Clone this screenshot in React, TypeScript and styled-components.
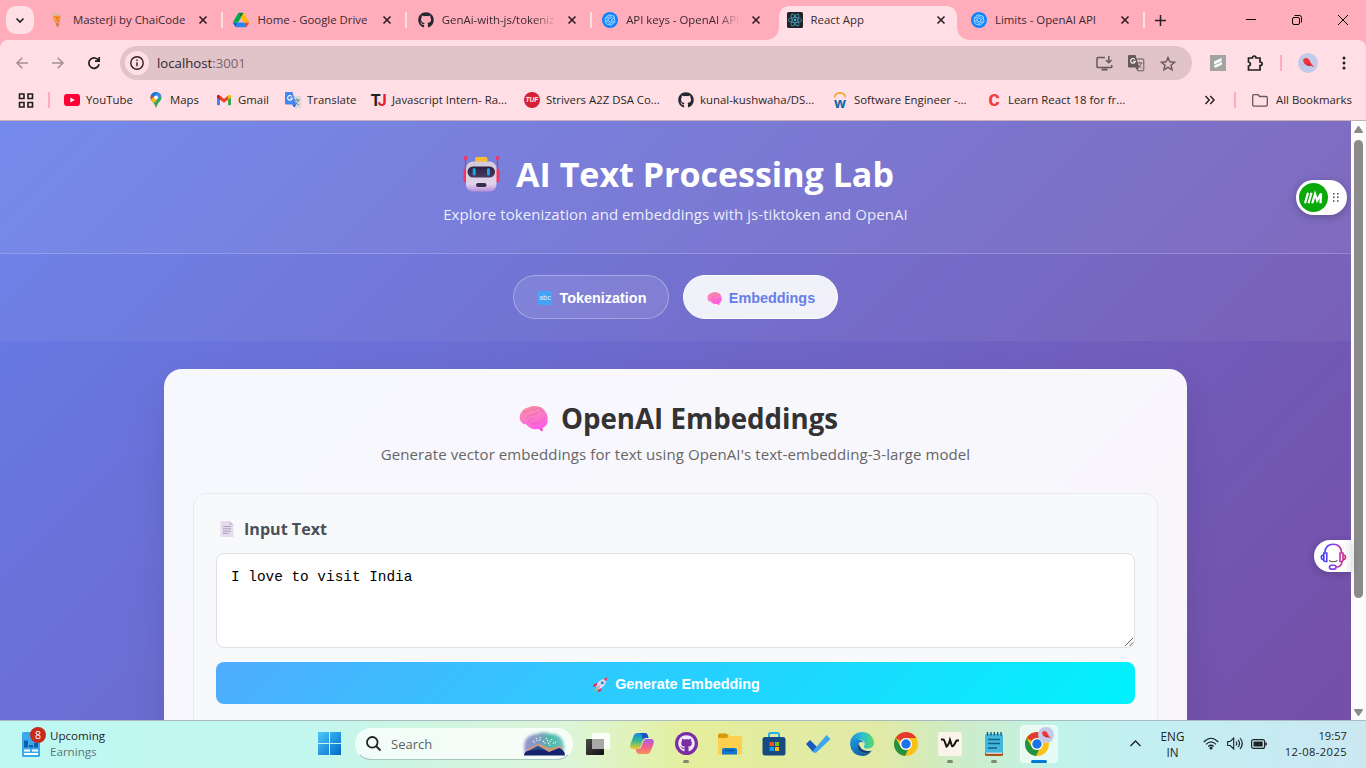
import React from "react";
import styled, { createGlobalStyle } from "styled-components";
import { FaGithub } from "react-icons/fa";
import { SiOpenai, SiReact } from "react-icons/si";

const ui = `"Open Sans", "Noto Sans", sans-serif`;
const arial = `"Liberation Sans", Arial, sans-serif`;

const Global = createGlobalStyle`
  *, *::before, *::after { box-sizing: border-box; }
  body { margin: 0; overflow: hidden; font-family: ${ui}; }
  svg { display: block; flex: none; overflow: visible; }
`;

const Screen = styled.div`
  width: 1366px;
  height: 768px;
  display: flex;
  flex-direction: column;
  overflow: hidden;
  background: #ffadbb;
`;

/* ---------- browser chrome ---------- */

const TabStrip = styled.div`
  height: 40px;
  flex: none;
  display: flex;
  align-items: center;
  padding-left: 6px;
  color: #3a2a30;
`;

const TabSearch = styled.div`
  width: 28px;
  height: 28px;
  border-radius: 10px;
  background: #ffdfe5;
  display: grid;
  place-items: center;
  margin-right: 7px;
`;

const Tab = styled.div<{ $sep?: boolean }>`
  position: relative;
  width: 178px;
  height: 40px;
  margin-right: 6.4px;
  flex: none;
  display: flex;
  align-items: center;
  padding: 0 8px;
  &::after {
    content: "";
    display: ${(p) => (p.$sep ? "block" : "none")};
    position: absolute;
    right: -4px;
    top: 12px;
    width: 2px;
    height: 16px;
    background: #ffdfe5;
  }
`;

const ActiveShape = styled.div`
  position: absolute;
  inset: 6px 0 0 0;
  background: #ffdfe5;
  border-radius: 10px 10px 0 0;
  &::before,
  &::after {
    content: "";
    position: absolute;
    bottom: 0;
    width: 12px;
    height: 12px;
  }
  &::before {
    left: -12px;
    background: radial-gradient(circle at 0 0, transparent 11.5px, #ffdfe5 12px);
  }
  &::after {
    right: -12px;
    background: radial-gradient(circle at 100% 0, transparent 11.5px, #ffdfe5 12px);
  }
`;

const TabIcon = styled.div`
  position: relative;
  width: 16px;
  height: 16px;
  display: grid;
  place-items: center;
`;

const TabTitle = styled.div<{ $fade?: boolean }>`
  position: relative;
  flex: 1;
  margin-left: 8px;
  margin-right: 8px;
  font-size: 11.4px;
  line-height: 16px;
  white-space: nowrap;
  overflow: hidden;
  mask-image: ${(p) => (p.$fade ? "linear-gradient(90deg,#000 80%,transparent)" : "none")};
`;

const CloseBox = styled.div`
  position: relative;
  width: 16px;
  height: 16px;
  display: grid;
  place-items: center;
`;

const NewTab = styled.div`
  width: 11px;
  margin-left: 8px;
`;

const WindowButtons = styled.div`
  margin-left: auto;
  display: flex;
`;

const WindowButton = styled.div`
  width: 46px;
  height: 40px;
  display: grid;
  place-items: center;
`;

const Toolbar = styled.div`
  height: 40px;
  flex: none;
  background: #ffdfe5;
  border-radius: 8px 8px 0 0;
  display: flex;
  align-items: center;
  padding: 6px 0 0 4px;
`;

const ToolButton = styled.div<{ $w?: number }>`
  width: ${(p) => p.$w ?? 36}px;
  height: 34px;
  flex: none;
  display: grid;
  place-items: center;
`;

const AddressBar = styled.div`
  width: 1072px;
  flex: none;
  height: 34px;
  margin-left: 8px;
  border-radius: 17px;
  background: #e1c4ca;
  display: flex;
  align-items: center;
  padding: 0 8px 0 5px;
`;

const SiteInfo = styled.div`
  width: 24px;
  height: 24px;
  border-radius: 50%;
  background: #ffdfe5;
  display: grid;
  place-items: center;
`;

const Url = styled.div`
  margin-left: 8px;
  flex: 1;
  font-size: 13.2px;
  line-height: 20px;
  color: #33262b;
  span {
    color: #7a6469;
  }
`;

const ShortRule = styled.div`
  width: 2px;
  height: 16px;
  background: #ffadbb;
  flex: none;
`;

const Bookmarks = styled.div`
  height: 41px;
  flex: none;
  background: #ffdfe5;
  border-bottom: 1px solid #c9adb9;
  display: flex;
  align-items: center;
  font-size: 11.4px;
  color: #2b1f24;
  padding-left: 18px;
`;

const Bookmark = styled.div<{ $w: number; $gap?: number }>`
  width: ${(p) => p.$w}px;
  flex: none;
  display: flex;
  align-items: center;
  gap: ${(p) => p.$gap ?? 6}px;
  white-space: nowrap;
  span {
    padding-bottom: 2px;
  }
`;

/* ---------- page ---------- */

const Viewport = styled.div`
  position: relative;
  height: 599px;
  flex: none;
  display: flex;
  overflow: hidden;
`;

const Page = styled.div`
  width: 1351px;
  height: 757px;
  background: linear-gradient(135deg, #667eea 0%, #764ba2 100%);
`;

const Header = styled.header`
  height: 133px;
  padding-top: 28px;
  background: rgba(255, 255, 255, 0.1);
  border-bottom: 1px solid rgba(255, 255, 255, 0.2);
  text-align: center;
  color: #fff;
`;

const Heading = styled.div<{ $size: number; $gap: number; $lh: number }>`
  display: flex;
  justify-content: center;
  align-items: center;
  gap: ${(p) => p.$gap}px;
  padding-left: 6px;
  font-size: ${(p) => p.$size}px;
  line-height: ${(p) => p.$lh}px;
  font-weight: 700;
`;

const Lead = styled.p<{ $color: string; $track: number }>`
  margin: 3px 0 0;
  text-align: center;
  font-size: 15px;
  line-height: 24px;
  letter-spacing: ${(p) => p.$track}px;
  color: ${(p) => p.$color};
`;

const Nav = styled.nav`
  height: 87px;
  background: rgba(255, 255, 255, 0.05);
  display: flex;
  justify-content: center;
  align-items: flex-start;
  padding-top: 21px;
  gap: 14px;
`;

const NavButton = styled.div<{ $active?: boolean; $w: number }>`
  width: ${(p) => p.$w}px;
  height: 44px;
  border-radius: 22px;
  border: 1px solid ${(p) => (p.$active ? "#fff" : "rgba(255,255,255,0.3)")};
  background: ${(p) => (p.$active ? "rgba(255,255,255,0.9)" : "rgba(255,255,255,0.1)")};
  color: ${(p) => (p.$active ? "#667eea" : "#fff")};
  display: flex;
  justify-content: center;
  align-items: center;
  gap: 7px;
  padding: 2px 0 0 1px;
  font: 700 14.4px/20px ${arial};
`;

const Card = styled.main`
  width: 1023px;
  height: 420px;
  margin: 28px auto 0;
  padding: 28px 29px 0;
  border-radius: 18px;
  background: rgba(255, 255, 255, 0.95);
  box-shadow: 0 18px 36px rgba(0, 0, 0, 0.1);
  color: #333;
`;

const Section = styled.section`
  height: 300px;
  margin-top: 27px;
  padding: 21px 22px 0;
  border: 1px solid #e9ecef;
  border-radius: 13px;
  background: #f8f9fa;
`;

const FieldLabel = styled.div`
  display: flex;
  align-items: center;
  gap: 8px;
  padding-left: 2px;
  height: 28px;
  font-size: 16.1px;
  line-height: 28px;
  font-weight: 700;
  color: #495057;
`;

const TextBox = styled.div`
  position: relative;
  width: 919px;
  height: 95px;
  margin-top: 10px;
  padding: 13px 14px;
  border: 1px solid #dee2e6;
  border-radius: 8px;
  background: #fff;
  color: #000;
  font: 14.4px/20px "Liberation Mono", "Courier New", monospace;
`;

const Grip = styled.div`
  position: absolute;
  right: 1px;
  bottom: 1px;
`;

const Generate = styled.div`
  width: 919px;
  height: 42px;
  margin-top: 14px;
  border-radius: 8px;
  background: linear-gradient(135deg, #4facfe 0%, #00f2fe 100%);
  display: flex;
  justify-content: center;
  align-items: center;
  gap: 6px;
  padding: 2px 0 0 1px;
  color: #fff;
  font: 700 14.4px/20px ${arial};
`;

const ScrollTrack = styled.div`
  width: 15px;
  height: 599px;
  background: #fcfcfc;
  display: flex;
  flex-direction: column;
  align-items: center;
  padding: 5px 0 4px;
`;

const ScrollThumb = styled.div`
  width: 9px;
  height: 458px;
  margin: 7px 0 auto;
  border-radius: 5px;
  background: #8b8b8b;
`;

const MaskWidget = styled.div`
  position: absolute;
  left: 1296px;
  top: 59px;
  width: 51px;
  height: 35px;
  border-radius: 18px;
  background: #fff;
  box-shadow: 0 2px 8px rgba(0, 0, 0, 0.25);
  display: flex;
  align-items: center;
  gap: 5px;
  padding-left: 3px;
`;

const SupportWidget = styled.div`
  position: absolute;
  left: 1314px;
  top: 419px;
  width: 37px;
  height: 32px;
  border-radius: 16px 0 0 16px;
  background: linear-gradient(90deg, #fff 78%, #eee);
  box-shadow: 0 2px 8px rgba(0, 0, 0, 0.2);
  padding: 3px 0 0 6px;
`;

/* ---------- taskbar ---------- */

const Taskbar = styled.footer`
  height: 48px;
  flex: none;
  border-top: 1px solid #a9bcbf;
  background: linear-gradient(90deg, #bff7f2 0, #c1f7f0 300px, #ccf5e4 400px, #ddf5d8 570px,
    #e0f2b5 640px, #e4ee9c 690px, #e0eaa6 880px, #cdecc8 960px, #c0f3ea 1060px, #c2eff2 1130px, #cbe8f2 1366px);
  display: flex;
  align-items: center;
  padding-bottom: 2px;
  color: #1c2426;
`;

const Widgets = styled.div`
  width: 285px;
  margin-left: 22px;
  display: flex;
  align-items: center;
  gap: 9px;
  font-size: 11.6px;
  line-height: 16px;
  span {
    color: #5c7474;
  }
`;

const WidgetIcon = styled.div`
  position: relative;
  width: 19px;
  height: 24px;
`;

const Badge = styled.div`
  position: absolute;
  left: 8px;
  top: -5px;
  width: 16px;
  height: 16px;
  border-radius: 50%;
  background: #c42b1c;
  color: #fff;
  font-size: 10.5px;
  line-height: 16px;
  text-align: center;
`;

const Cell = styled.div<{ $w?: number }>`
  position: relative;
  width: ${(p) => p.$w ?? 44}px;
  height: 47px;
  flex: none;
  display: grid;
  place-items: center;
`;

const RunDot = styled.div<{ $active?: boolean }>`
  position: absolute;
  left: 50%;
  top: 40px;
  width: ${(p) => (p.$active ? 16 : 6)}px;
  height: 3px;
  border-radius: 2px;
  transform: translateX(-50%);
  background: ${(p) => (p.$active ? "#0078d4" : "#7d8a70")};
`;

const ActiveTile = styled.div`
  width: 38px;
  height: 38px;
  border-radius: 4px;
  background: rgba(255, 255, 255, 0.6);
  border: 1px solid rgba(255, 255, 255, 0.35);
  display: grid;
  place-items: center;
`;

const SearchPill = styled.div`
  width: 218px;
  height: 32px;
  margin-left: 4px;
  margin-right: 3px;
  border-radius: 16px;
  background: rgba(255, 255, 255, 0.75);
  border: 1px solid rgba(255, 255, 255, 0.5);
  border-bottom-color: #a9c5bf;
  display: flex;
  align-items: center;
  padding: 0 5px 0 10px;
  font-size: 13px;
  color: #5a5f61;
  span {
    margin-left: 10px;
    flex: 1;
  }
`;

const Tray = styled.div`
  display: flex;
  align-items: center;
  margin-left: 62px;
`;

const Language = styled.div`
  width: 53px;
  text-align: center;
  font-size: 11.7px;
  line-height: 16px;
`;

const Clock = styled.div`
  margin-left: auto;
  margin-right: 19px;
  text-align: right;
  font-size: 11.2px;
  line-height: 16px;
  white-space: nowrap;
  span {
    letter-spacing: 0.4px;
  }
`;

/* ---------- drawings ---------- */

const Close = () => (
  <svg width="8" height="8" viewBox="0 0 8 8" stroke="#2b1f24" strokeWidth="1.6">
    <path d="M.5.5l7 7M7.5.5l-7 7" />
  </svg>
);

const OpenAiBadge = () => (
  <svg width="16" height="16" viewBox="0 0 16 16">
    <circle cx="8" cy="8" r="8" fill="#0a84ff" />
    <SiOpenai x="2.5" y="2.5" size={11} color="#d7ecff" />
  </svg>
);

const ReactBadge = () => (
  <svg width="16" height="16" viewBox="0 0 16 16">
    <rect width="16" height="16" rx="1.5" fill="#20232a" />
    <SiReact x="1" y="1" size={14} color="#4fb5cc" />
  </svg>
);

const Cup = () => (
  <svg width="16" height="16" viewBox="0 0 16 16">
    <path d="M1.5 1.8l8.500-1 .8 2.800-8 .8z" fill="#dfb7a2" />
    <path d="M4 4.200l7.500-.6-.8 6.400-4.700.5z" fill="#f58a1f" />
    <path d="M5 5.500l5.500 1-.5 2.500-4-1z" fill="#ffb04c" />
    <path d="M7 5.500l2.500 3" stroke="#a8481a" strokeWidth="1" />
    <path d="M6.500 11l4-.5-.4 3.800-2.600.5z" fill="#d08458" />
  </svg>
);

const Drive = () => (
  <svg width="16" height="16" viewBox="0 0 87.300 78">
    <path d="m6.600 66.850 3.850 6.650c.8 1.400 1.950 2.500 3.300 3.300l13.750-23.800h-27.500c0 1.550.4 3.100 1.200 4.500z" fill="#0066da" />
    <path d="m43.650 25-13.750-23.800c-1.350.8-2.500 1.900-3.300 3.300l-25.400 44a9.060 9.060 0 0 0-1.200 4.500h27.500z" fill="#00ac47" />
    <path d="m73.550 76.800c1.350-.8 2.500-1.900 3.300-3.300l1.600-2.750 7.650-13.250c.8-1.400 1.200-2.950 1.200-4.500h-27.502l5.852 11.500z" fill="#ea4335" />
    <path d="m43.650 25 13.750-23.800c-1.350-.8-2.900-1.200-4.500-1.200h-18.500c-1.600 0-3.150.45-4.500 1.200z" fill="#00832d" />
    <path d="m59.800 53h-32.300l-13.750 23.800c1.350.8 2.900 1.200 4.500 1.200h50.800c1.600 0 3.150-.45 4.500-1.200z" fill="#2684fc" />
    <path d="m73.400 26.500-12.700-22c-.8-1.400-1.950-2.500-3.300-3.300l-13.750 23.800 16.150 28h27.450c0-1.550-.4-3.100-1.200-4.500z" fill="#ffba00" />
  </svg>
);

const Translate = ({ gray }: { gray?: boolean }) => (
  <svg width="16" height="16" viewBox="0 0 16 16">
    <path d="M6.500 4H15q.8 0 .8.8V15q0 .8-.8.8H9.800z" fill={gray ? "#e1c4ca" : "#d5d8dc"} stroke={gray ? "#66575b" : "none"} />
    <path d="M8.500 8h6M11.500 6.800V8M13.500 8q-.8 3-4 5M10 9.500q1 2.500 3.800 3.500" stroke={gray ? "#66575b" : "#687a85"} fill="none" strokeWidth=".9" />
    <path d="M1 0h6.500l3.500 12.500H1q-1 0-1-1V1q0-1 1-1z" fill={gray ? "#66575b" : "#4285f4"} />
    <path d="M7 12.500h4L9.500 15.500z" fill={gray ? "#66575b" : "#1a56c4"} />
    <path d="M6.800 4.500A2.300 2.300 0 1 0 7.200 6.300H5.200" stroke="#fff" fill="none" strokeWidth="1.100" />
  </svg>
);

const YouTube = () => (
  <svg width="16" height="16" viewBox="0 0 16 16">
    <rect y="2" width="16" height="12" rx="3" fill="#f03" />
    <path d="M6.400 5.400v5.200L10.800 8z" fill="#fff" />
  </svg>
);

const Maps = () => (
  <svg width="16" height="16" viewBox="0 0 16 16">
    <clipPath id="pin">
      <path d="M8 0a5.500 5.500 0 0 1 5.500 5.500C13.500 9.500 9.300 10.500 8.600 15q-.6 1.600-1.200 0C6.700 10.500 2.500 9.500 2.500 5.500A5.500 5.500 0 0 1 8 0z" />
    </clipPath>
    <g clipPath="url(#pin)">
      <rect width="16" height="16" fill="#34a853" />
      <path d="M0 0h10L4 7 0 4z" fill="#1a73e8" />
      <path d="M0 2l6 3-4 6-2-2z" fill="#ea4335" />
      <path d="M2 9l9-9 4 2L4 13z" fill="#4285f4" />
      <path d="M1 9l5-4 3 3-6 6z" fill="#fbbc04" />
    </g>
    <circle cx="8" cy="5.500" r="1.900" fill="#fff" />
  </svg>
);

const Gmail = () => (
  <svg width="16" height="16" viewBox="0 0 16 16">
    <path d="M1 4v8.500q0 .8.800.8H4V6.800z" fill="#4285f4" />
    <path d="M15 4v8.500q0 .8-.8.8H12V6.800z" fill="#34a853" />
    <path d="M12 3.800v4L15 5.600V4q-.4-2-2.100-1z" fill="#fbbc04" />
    <path d="M4 3.800v4L1 5.600V4q.4-2 2.100-1z" fill="#c5221f" />
    <path d="M4 3.700l4 3 4-3v4l-4 3-4-3z" fill="#ea4335" />
  </svg>
);

const LetterMark = ({ kind }: { kind: "TJ" | "TUF" | "W" | "C" }) => (
  <svg width="16" height="16" viewBox="0 0 16 16" fontWeight="700" textAnchor="middle">
    {kind === "TJ" && (
      <text x="8.200" y="14" fontFamily="Roboto" fontSize="16" letterSpacing="-1" fill="#222">
        T<tspan fill="#e0202c">J</tspan>
      </text>
    )}
    {kind === "TUF" && (
      <>
        <circle cx="8" cy="8" r="8" fill="#d71f35" />
        <text x="8" y="10.400" fontFamily="Liberation Sans" fontSize="6.600" fontStyle="italic" fill="#fff">TUF</text>
      </>
    )}
    {kind === "W" && (
      <>
        <path d="M2.500 5.500Q3 1 8 1t5.500 4.500" fill="none" stroke="#f6a11f" strokeWidth="1.300" />
        <text x="8" y="15.500" fontFamily="Open Sans" fontSize="14" fill="#0b68ad">w</text>
      </>
    )}
    {kind === "C" && (
      <text x="8" y="14" fontFamily="Roboto" fontSize="17" fontWeight="900" fill="#ef4140">C</text>
    )}
  </svg>
);

const Bird = ({ size }: { size: number }) => (
  <svg width={size} height={size} viewBox="0 0 20 20">
    <circle cx="10" cy="10" r="10" fill="#c3c9e8" />
    <path d="M5 7q.5-2 3.500-2 3 .5 4 4.500l3.500 4.500-4-1.500q-6 1-7-5.500z" fill="#f0343c" />
    <path d="M8.500 10l5 3-3.500-.3z" fill="#a3243d" />
  </svg>
);

const Brain = ({ size }: { size: number }) => (
  <svg width={size} height={size} viewBox="0 0 32 32">
    <defs>
      <linearGradient id="brain" x1="0" y1="0" x2=".4" y2="1">
        <stop offset="0" stopColor="#e8809a" />
        <stop offset=".25" stopColor="#f98cab" />
        <stop offset=".55" stopColor="#fb7cc8" />
        <stop offset="1" stopColor="#ff5fe0" />
      </linearGradient>
    </defs>
    <path d="M21 25l5 0 0 5.500q-3-1-5-4.500z" fill="#f43fc0" />
    <path d="M11 3.500q4-2 9-1 5 .5 8 4.500 4 4 3.500 10Q32 23 28 25q-3 3-8 2.500-6 1-9-2-2-1-2.500-3-5 0-7-4Q-.5 13 2.500 9 5 4.500 11 3.500z" fill="url(#brain)" />
    <path d="M5 9q4 1.500 6-2M13 6q4 2 7-1M23 4q-1 4 4 5M8 16q4-5 7-4 4 0 6-3M11 19q0-3 4-3M14 21q6 1.500 9-1 4-1 6-5" fill="none" stroke="#d9569c" strokeWidth="1" strokeLinecap="round" opacity=".65" />
  </svg>
);

const Robot = () => (
  <svg width="37" height="38" viewBox="0 0 37 38">
    <defs>
      <linearGradient id="bot" x1="0" y1="0" x2="0" y2="1">
        <stop offset="0" stopColor="#d2cbd8" />
        <stop offset=".75" stopColor="#e0d2ea" />
        <stop offset="1" stopColor="#b78fd8" />
      </linearGradient>
      <linearGradient id="visor" x1="0" y1="0" x2="0" y2="1">
        <stop offset="0" stopColor="#2b1f3d" />
        <stop offset="1" stopColor="#4a3b63" />
      </linearGradient>
    </defs>
    <path d="M2.500 3v14M34.500 3v14" stroke="#d8355f" strokeWidth="1.200" />
    <circle cx="2.500" cy="3" r="2" fill="#f8335e" />
    <circle cx="34.500" cy="3" r="2" fill="#f8335e" />
    <rect x=".5" y="14" width="4" height="13.500" rx="2" fill="#f0365f" />
    <rect x="32.500" y="14" width="4" height="13.500" rx="2" fill="#f0365f" />
    <rect x="12" y="2" width="12.500" height="5.500" rx="2" fill="#f9bd2e" />
    <rect x="3" y="6.500" width="30.500" height="30" rx="7" fill="url(#bot)" />
    <rect x="4.500" y="11.500" width="27.500" height="11" rx="5.500" fill="url(#visor)" />
    <rect x="9.700" y="13" width="3" height="7.500" rx="1.500" fill="#19a5e8" />
    <rect x="24" y="13" width="3" height="7.500" rx="1.500" fill="#19a5e8" />
    <rect x="13" y="28" width="10.500" height="4" rx="2" fill="#382c4c" />
  </svg>
);

const AbcIcon = () => (
  <svg width="16" height="16" viewBox="0 0 16 16">
    <rect x="1" y="1" width="14" height="14" rx="1" fill="#45a3f7" />
    <text x="8" y="10" textAnchor="middle" fontFamily="Open Sans" fontWeight="400" fontSize="7" fill="#e7f4ff">abc</text>
  </svg>
);

const PageIcon = () => (
  <svg width="18" height="18" viewBox="0 0 18 18">
    <path d="M2.500 1h9l4 4v12h-13z" fill="#e5dcf0" />
    <path d="M11.500 1v4h4z" fill="#c8bdd3" />
    <path d="M5 6.500h8M5 8.800h8M5 11.100h8M5 13.300h5.500" stroke="#a99db5" strokeWidth="1" />
  </svg>
);

const Rocket = () => (
  <svg width="17" height="17" viewBox="0 0 17 17">
    <path d="M5 7L1.500 8.500 1 11l4-1zM10 12l-1.500 3.500-2.500.5 1-4z" fill="#e1304f" />
    <path d="M4 12l-2.500 3.500L5.500 13z" fill="#ffb02e" />
    <path d="M4 11Q6 3 14.500 2.500 14.500 10 6.500 13.500z" fill="#e8dff0" />
    <path d="M11.500 2.900q1.500-.5 4-1.700-.7 2.500-1.500 4.300z" fill="#f23b5d" />
    <circle cx="10.300" cy="6.800" r="1.600" fill="#3c8ae8" />
    <path d="M4 11l2.500 2.500L9 8.500z" fill="#b8a7c9" />
  </svg>
);

const Headset = () => (
  <svg width="27" height="27" viewBox="0 0 27 27" fill="none">
    <defs>
      <linearGradient id="hs" gradientUnits="userSpaceOnUse" x1="1" x2="26" y1="0" y2="0">
        <stop offset="0" stopColor="#3340ff" />
        <stop offset=".5" stopColor="#8a3df0" />
        <stop offset="1" stopColor="#e0266f" />
      </linearGradient>
    </defs>
    <g stroke="url(#hs)" strokeWidth="1.600">
      <path d="M4.800 9.500Q5.500 1.200 13.200 1.200t8.400 8.300" />
      <path d="M3.800 10h3v8.500H5.300Q3.800 18.500 3.800 17z" />
      <path d="M20 10h3v7q0 1.500-1.500 1.500H20z" />
      <path d="M3.800 12q-2.500 0-2.500 2.300t2.500 2.300M23 12q2.500 0 2.500 2.300T23 16.600M22 18.500q0 5-6 5.800" />
      <rect x="9.500" y="22.300" width="6.500" height="3.800" rx="1.900" />
    </g>
    <path d="M9 17.500q4.300 2.500 8.600 0" stroke="#555" strokeWidth="1.100" />
  </svg>
);

const MaskLogo = () => (
  <svg width="29" height="29" viewBox="0 0 29 29">
    <circle cx="14.500" cy="14.500" r="14.500" fill="#0aa80a" />
    <path d="M6 20.300l3-10.500M9.500 20.300l3-10.500" stroke="#fff" strokeWidth="2.200" />
    <path d="M13.300 20.300l2.700-9.300 2.200 6.500 3.800-7-.5 9.800" stroke="#fff" strokeWidth="2.300" fill="none" />
  </svg>
);

const StartLogo = () => (
  <svg width="23" height="23" viewBox="0 0 23 23">
    <defs>
      <linearGradient id="win" gradientUnits="userSpaceOnUse" x1="0" y1="0" x2="23" y2="23">
        <stop offset="0" stopColor="#4cc9fa" />
        <stop offset="1" stopColor="#0068c9" />
      </linearGradient>
    </defs>
    <path d="M0 0h11v11H0zM12 0h11v11H12zM0 12h11v11H0zM12 12h11v11H12z" fill="url(#win)" />
  </svg>
);

const SearchScene = () => (
  <svg width="46" height="26" viewBox="0 0 46 26">
    <defs>
      <linearGradient id="sky" x1="0" x2="1" y1="0" y2="0">
        <stop offset="0" stopColor="#8a86cf" />
        <stop offset=".4" stopColor="#7295b8" />
        <stop offset=".65" stopColor="#36b19c" />
        <stop offset="1" stopColor="#62bfc3" />
      </linearGradient>
      <filter id="soft"><feGaussianBlur stdDeviation="1.500" /></filter>
    </defs>
    <path d="M4 23Q0 4 16 3q6-3 14 0 14 0 13 17z" fill="url(#sky)" filter="url(#soft)" opacity=".9" />
    <path d="M6 18l12-5 10 4 12-2v7H6z" fill="#e8956d" opacity=".8" />
    <path d="M3 24.500q0-4 5-5l9-4.500 11 6 10-4q6 2 6 7.500z" fill="#17226e" />
    <path d="M8 20l9-5 8 4.500-8-1z" fill="#254f8f" />
    <path d="M12 10l2 2M19 6v4M25 7l2 3M31 8l-3 4M35 11l-4 2M15 7l2 4M22 10l3 3M27 12l3 3" stroke="#fff" strokeWidth="1.100" strokeDasharray="1.200 1" />
  </svg>
);

const TaskView = () => (
  <svg width="24" height="24" viewBox="0 0 24 24">
    <defs>
      <linearGradient id="tv" x1="0" x2="1" y1="0" y2="1">
        <stop offset="0" stopColor="#4a4a4a" /><stop offset="1" stopColor="#111" />
      </linearGradient>
    </defs>
    <rect x="0" y="7" width="18" height="16" rx="1" fill="url(#tv)" />
    <rect x="6" y="1" width="18" height="16" rx="1" fill="#fff" opacity=".85" />
    <rect x="6" y="7" width="12" height="10" fill="#a8a8a8" />
  </svg>
);

const Copilot = () => (
  <svg width="24" height="24" viewBox="0 0 24 24">
    <defs>
      <linearGradient id="cpa" x1="0" x2="0" y1="0" y2="1">
        <stop offset="0" stopColor="#1784e8" /><stop offset=".5" stopColor="#38b88c" /><stop offset="1" stopColor="#f2cc2f" />
      </linearGradient>
      <linearGradient id="cpb" x1="0" x2="0" y1="0" y2="1">
        <stop offset="0" stopColor="#a95cf0" /><stop offset=".5" stopColor="#f0608f" /><stop offset="1" stopColor="#fb9053" />
      </linearGradient>
    </defs>
    <path d="M8 1h7q2 0 2.700 2.200L18.500 6h-3q-2 0-2.700 2L10.500 15Q9.700 17 7.500 17H3.500Q-1 17 .5 12L3.500 4Q4.500 1 8 1z" fill="url(#cpa)" />
    <path d="M10 1h5q2 0 2.700 2.200L18.500 6h-3q-2 0-2.700 2L12 3z" fill="#1651c9" />
    <path d="M16 22H9q-2 0-2.500-2L5.700 17H8.500q2 0 2.700-2L13.500 9Q14.200 7 16.500 7h4Q25 7 23.500 12l-3 7.500Q19.500 22 16 22z" fill="url(#cpb)" />
  </svg>
);

const GithubDesktop = () => (
  <svg width="23" height="23" viewBox="0 0 23 23">
    <circle cx="11.500" cy="11.500" r="11.500" fill="#7b2da3" />
    <FaGithub x="3" y="3" size={17} color="#f2e8f7" />
  </svg>
);

const Folder = () => (
  <svg width="24" height="24" viewBox="0 0 24 24">
    <path d="M0 3q0-1.500 1.500-1.500h7L11 4h11.500Q24 4 24 5.500V10H0z" fill="#d89a0a" />
    <path d="M0 6h8.500L11 4h11.500Q24 4 24 5.500V21q0 1.500-1.500 1.500h-21Q0 22.500 0 21z" fill="#ffd04f" />
    <path d="M4 22.500V18q0-2 2-2h11q2 0 2 2v4.500z" fill="#0f78cf" />
    <path d="M7 18.500h9" stroke="#0a4f95" strokeWidth="1.300" />
  </svg>
);

const Store = () => (
  <svg width="24" height="24" viewBox="0 0 24 24">
    <path d="M7 6V2.500Q7 1 8.500 1h7Q17 1 17 2.500V6" stroke="#26b1ea" strokeWidth="2" fill="none" />
    <rect x=".5" y="5" width="23" height="18.500" rx="2.500" fill="#154b80" />
    <path d="M7.500 10H12v4H7.500z" fill="#f25022" /><path d="M13 10h4v4h-4z" fill="#7fba00" />
    <path d="M7.500 15H12v4H7.500z" fill="#00a4ef" /><path d="M13 15h4v4h-4z" fill="#ffb900" />
  </svg>
);

const Todo = () => (
  <svg width="24" height="24" viewBox="0 0 24 24">
    <path d="M0 12l4-4 7 7-4 5z" fill="#185abd" />
    <path d="M6.500 19.500L20.500 3 24.500 7 11 20q-2.200 2-4.500-.5z" fill="#41a5ee" />
  </svg>
);

const Edge = () => (
  <svg width="24" height="24" viewBox="0 0 24 24">
    <defs>
      <linearGradient id="eg" x1="0" x2="1" y1=".3" y2=".3">
        <stop offset="0" stopColor="#1c8fd8" /><stop offset=".55" stopColor="#2dc0cf" /><stop offset="1" stopColor="#5bdc5f" />
      </linearGradient>
      <linearGradient id="eb" x1="0" x2="1" y1="0" y2="1">
        <stop offset="0" stopColor="#1b9de2" /><stop offset="1" stopColor="#0c4a91" />
      </linearGradient>
    </defs>
    <path d="M0 11C1 4 6 0 12 0q9 0 12 9 1 6-5 7.500-6 .5-5-2.500 2-2-.5-5-3-3-8-1.500Q2 8.500 0 11z" fill="url(#eg)" />
    <path d="M0 12Q1 7 7 7q5 0 6.500 3.500Q9 9 8 13q0 7 7 8.500 3 .2 7-3Q18 24 12 24 1 23 0 12z" fill="url(#eb)" />
    <path d="M8.500 11Q6 20 15 21.500q3 .3 7-3-1.500.7-4.500.5Q10 18.500 8.500 11z" fill="#113f7c" />
  </svg>
);

const Chrome = () => (
  <svg width="24" height="24" viewBox="0 0 24 24">
    <circle cx="12" cy="12" r="12" fill="#fbc116" />
    <path d="M1.600 6A12 12 0 0 1 22.400 6H12A6 6 0 0 0 6.800 9z" fill="#e33b2e" />
    <path d="M1.600 6L6.800 15Q9 18.500 14 17.700L11 23.950A12 12 0 0 1 1.600 6z" fill="#229342" />
    <circle cx="12" cy="12" r="6" fill="#fff" />
    <circle cx="12" cy="12" r="4.700" fill="#1a73e8" />
  </svg>
);

const WaveApp = () => (
  <svg width="24" height="24" viewBox="0 0 24 24">
    <rect width="24" height="24" rx="2.500" fill="#faf3ea" />
    <path d="M3 7.500h2q1 0 1.500 1.500l2 5.500q2-1 3.500-6.500l2 6q1 .5 2-1l2.500-4.500M18 8.500h3" stroke="#15110e" strokeWidth="2" fill="none" />
  </svg>
);

const Notepad = () => (
  <svg width="18" height="24" viewBox="0 0 18 24">
    <rect y="2" width="18" height="20" rx="1.500" fill="#43b7dc" />
    <path d="M0 21h18v1.500q0 1.500-1.500 1.500h-15Q0 24 0 22.500z" fill="#a85318" />
    <path d="M1 21.200h16" stroke="#fff" />
    <path d="M3 7.500h12M3 11.500h12M3 16h9" stroke="#116086" strokeWidth="1.300" />
    <path d="M2.500 0v3.500M6 0v3.500M9.300 0v3.500M12.600 0v3.500M16 0v3.500" stroke="#0d506e" strokeWidth="1.300" />
  </svg>
);

const ChromeActive = () => (
  <svg width="28" height="32" viewBox="0 0 28 32">
    <g transform="translate(0 4)"><Chrome /></g>
    <svg x="13" y="-1" width="16" height="16"><Bird size={16} /></svg>
  </svg>
);

const NewsIcon = () => (
  <svg width="18" height="25" viewBox="0 0 18 25">
    <rect width="18" height="25" rx="1.500" fill="#3aa9ec" />
    <path d="M2 8.500h4v7H2zM7 13h4v2.500H7zM12 11h4v4.500h-4z" fill="#0b5ea9" />
    <path d="M2 18.500h6M10 18.500h6M2 22h14" stroke="#fff" strokeWidth="2" />
  </svg>
);

const DragDots = () => (
  <svg width="6" height="9" viewBox="0 0 6 9" fill="#444">
    <path d="M0 0h1.500v1.500H0zM4 0h1.500v1.500H4zM0 3.600h1.500v1.500H0zM4 3.600h1.500v1.500H4zM0 7.200h1.500v1.500H0zM4 7.200h1.500v1.500H4z" />
  </svg>
);

/* ---------- data ---------- */

const tabs = [
  { title: "MasterJi by ChaiCode", icon: <Cup />, sep: true },
  { title: "Home - Google Drive", icon: <Drive />, sep: true },
  { title: "GenAi-with-js/tokeniz", icon: <FaGithub size={16} color="#24292f" />, sep: true, fade: true },
  { title: "API keys - OpenAI API", icon: <OpenAiBadge />, fade: true },
  { title: "React App", icon: <ReactBadge />, active: true },
  { title: "Limits - OpenAI API", icon: <OpenAiBadge />, sep: true },
];

const bookmarks = [
  { label: "YouTube", w: 84, icon: <YouTube /> },
  { label: "Maps", w: 68, icon: <Maps /> },
  { label: "Gmail", w: 69, icon: <Gmail /> },
  { label: "Translate", w: 85, icon: <Translate /> },
  { label: "Javascript Intern- Ra...", w: 154, icon: <LetterMark kind="TJ" /> },
  { label: "Strivers A2Z DSA Co...", w: 154, icon: <LetterMark kind="TUF" /> },
  { label: "kunal-kushwaha/DS...", w: 154, icon: <FaGithub size={16} color="#24292f" /> },
  { label: "Software Engineer -...", w: 154, icon: <LetterMark kind="W" /> },
  { label: "Learn React 18 for fr...", w: 217, icon: <LetterMark kind="C" /> },
];

const apps: { icon: React.ReactNode; running?: boolean }[] = [
  { icon: <TaskView /> },
  { icon: <Copilot /> },
  { icon: <GithubDesktop />, running: true },
  { icon: <Folder /> },
  { icon: <Store /> },
  { icon: <Todo /> },
  { icon: <Edge /> },
  { icon: <Chrome /> },
  { icon: <WaveApp />, running: true },
  { icon: <Notepad />, running: true },
];

/* ---------- sections ---------- */

const BrowserChrome = () => (
  <>
    <TabStrip>
      <TabSearch>
        <svg width="8" height="5" viewBox="0 0 8 5" fill="none" stroke="#222" strokeWidth="1.600"><path d="M.5.5L4 4 7.500.5" /></svg>
      </TabSearch>
      {tabs.map((t) => (
        <Tab key={t.title} $sep={t.sep}>
          {t.active && <ActiveShape />}
          <TabIcon>{t.icon}</TabIcon>
          <TabTitle $fade={t.fade}>{t.title}</TabTitle>
          <CloseBox><Close /></CloseBox>
        </Tab>
      ))}
      <NewTab>
        <svg width="11" height="11" viewBox="0 0 11 11" stroke="#2b1f24" strokeWidth="1.500"><path d="M5.500 0v11M0 5.500h11" /></svg>
      </NewTab>
      <WindowButtons>
        <WindowButton><svg width="10" height="10" viewBox="0 0 10 10" stroke="#000"><path d="M0 4.500h10" /></svg></WindowButton>
        <WindowButton><svg width="10" height="10" viewBox="0 0 10 10" stroke="#000" fill="none"><rect x=".5" y="2.500" width="7" height="7" rx="1.500" /><path d="M2.500 .5H7.500Q9.500.5 9.500 2.500V7.500" /></svg></WindowButton>
        <WindowButton><svg width="10" height="10" viewBox="0 0 10 10" stroke="#000"><path d="M0 0l10 10M10 0L0 10" /></svg></WindowButton>
      </WindowButtons>
    </TabStrip>
    <Toolbar>
      <ToolButton><svg width="12" height="12" viewBox="0 0 12 12" fill="none" stroke="#a58f95" strokeWidth="1.500"><path d="M12 6H1M6.300.7L1 6l5.300 5.300" /></svg></ToolButton>
      <ToolButton><svg width="12" height="12" viewBox="0 0 12 12" fill="none" stroke="#a58f95" strokeWidth="1.500"><path d="M0 6h11M5.700.7L11 6l-5.300 5.300" /></svg></ToolButton>
      <ToolButton><svg width="12" height="12" viewBox="0 0 12 12" fill="none" stroke="#1f1f1f" strokeWidth="1.700"><path d="M10.700 3.800A5.200 5.200 0 1 0 11.100 7.300M11.200 0v4.200H7" /></svg></ToolButton>
      <AddressBar>
        <SiteInfo>
          <svg width="14" height="14" viewBox="0 0 14 14" fill="none" stroke="#2b1f24" strokeWidth="1.400"><circle cx="7" cy="7" r="6.200" /><path d="M7 6.200v4M7 3.500v1.500" /></svg>
        </SiteInfo>
        <Url>localhost<span>:3001</span></Url>
        <ToolButton $w={32}>
          <svg width="17" height="15" viewBox="0 0 17 15" fill="none" stroke="#66575b" strokeWidth="1.500"><path d="M9 1.500H1.800Q1 1.500 1 2.300v8.400q0 .8.800.8H15q.8 0 .8-.8V9M12.800 0v6.500M10 4l2.800 2.800L15.600 4" /><path d="M5.500 13.500h6" strokeWidth="2" /></svg>
        </ToolButton>
        <ToolButton $w={32}><Translate gray /></ToolButton>
        <ToolButton $w={32}>
          <svg width="16" height="15" viewBox="0 0 16 15" fill="none" stroke="#66575b" strokeWidth="1.400"><path d="M8 1.500l1.900 4.300 4.700.4-3.600 3.100 1.100 4.600L8 11.400l-4.100 2.500L5 9.300 1.400 6.200l4.700-.4z" /></svg>
        </ToolButton>
      </AddressBar>
      <ToolButton $w={52}>
        <svg width="16" height="16" viewBox="0 0 16 16"><rect width="16" height="16" fill="#a3a3a3" /><path d="M4 6.500L11.500 3v3.200L4 9.500zM4 10.500L12 7v2.500L5 13z" fill="#fff" /></svg>
      </ToolButton>
      <ToolButton $w={22}>
        <svg width="17" height="16" viewBox="0 0 17 16" fill="none" stroke="#1f1f1f" strokeWidth="1.700"><path d="M1.500 3H5.500Q5.500 1 7.200 1T9 3h4v4q2.200 0 2.200 1.700T13 10.500V15H1.500V11Q3.500 10.700 3.500 9T1.500 7z" /></svg>
      </ToolButton>
      <ToolButton $w={30}><ShortRule /></ToolButton>
      <ToolButton $w={24}><Bird size={20} /></ToolButton>
      <ToolButton $w={48}>
        <svg width="4" height="14" viewBox="0 0 4 14" fill="#1f1f1f"><circle cx="2" cy="2" r="1.500" /><circle cx="2" cy="7" r="1.500" /><circle cx="2" cy="12" r="1.500" /></svg>
      </ToolButton>
    </Toolbar>
    <Bookmarks>
      <Bookmark $w={30}>
        <svg width="15" height="15" viewBox="-.5 0 15 15" fill="none" stroke="#1f1f1f" strokeWidth="1.600"><path d="M1 1h4.500v4.500H1zM9.500 1H14v4.500H9.500zM1 9.500h4.500V14H1zM9.500 9.500H14V14H9.500z" /></svg>
      </Bookmark>
      <Bookmark $w={16}><ShortRule /></Bookmark>
      {bookmarks.map((b) => (
        <Bookmark key={b.label} $w={b.w}>{b.icon}<span>{b.label}</span></Bookmark>
      ))}
      <Bookmark $w={31}>
        <svg width="14" height="10" viewBox="0 0 14 10" fill="none" stroke="#2b1f24" strokeWidth="1.500"><path d="M2.500 1l3.700 4-3.700 4M7.300 1L11 5 7.300 9" /></svg>
      </Bookmark>
      <Bookmark $w={18}><ShortRule /></Bookmark>
      <Bookmark $w={110} $gap={8}>
        <svg width="16" height="13" viewBox="0 0 16 13" fill="none" stroke="#66575b" strokeWidth="1.300"><path d="M.7 10.800V2Q.7.700 2 .7h4L7.700 2.500H14q1.300 0 1.300 1.300v7q0 1.300-1.300 1.300H2Q.7 12.100.7 10.800z" /></svg>
        <span>All Bookmarks</span>
      </Bookmark>
    </Bookmarks>
  </>
);

const EmbeddingsPage = () => (
  <Page>
    <Header>
      <Heading $size={34} $gap={16} $lh={50}><Robot />AI Text Processing Lab</Heading>
      <Lead $color="rgba(255,255,255,0.88)" $track={0.055}>Explore tokenization and embeddings with js-tiktoken and OpenAI</Lead>
    </Header>
    <Nav>
      <NavButton $w={156}><AbcIcon />Tokenization</NavButton>
      <NavButton $w={155} $active><Brain size={15} />Embeddings</NavButton>
    </Nav>
    <Card>
      <Heading $size={27.7} $gap={13} $lh={42}><Brain size={29} />OpenAI Embeddings</Heading>
      <Lead $color="#666" $track={0.09}>Generate vector embeddings for text using OpenAI's text-embedding-3-large model</Lead>
      <Section>
        <FieldLabel><PageIcon />Input Text</FieldLabel>
        <TextBox>
          I love to visit India
          <Grip><svg width="8" height="8" viewBox="0 0 8 8" stroke="#555" strokeWidth=".9"><path d="M0 8L8 0M4.500 8L8 4.500" /></svg></Grip>
        </TextBox>
        <Generate><Rocket />Generate Embedding</Generate>
      </Section>
    </Card>
  </Page>
);

const SystemTray = () => (
  <Tray>
    <Cell $w={22}><svg width="11" height="7" viewBox="0 0 11 7" fill="none" stroke="#1c2426" strokeWidth="1.300"><path d="M.5 6l5-5 5 5" /></svg></Cell>
    <Language>ENG<br />IN</Language>
    <Cell $w={24}>
      <svg width="16" height="13" viewBox="0 0 16 13" fill="none" stroke="#1c2426" strokeWidth="1.200"><path d="M.7 5Q8-2.500 15.300 5M3 7.300Q8 2.300 13 7.300M5.300 9.500Q8 7 10.700 9.500" /><circle cx="8" cy="11" r="1.500" fill="#1c2426" stroke="none" /></svg>
    </Cell>
    <Cell $w={24}>
      <svg width="16" height="13" viewBox="0 0 16 13" fill="none" stroke="#1c2426" strokeWidth="1.100"><path d="M.7 4.500h2.500L6.700 1v11L3.200 8.500H.7zM9 4.500q1.500 2 0 4M11 2.800q3 3.700 0 7.400M13 1q4.500 5.500 0 11" /></svg>
    </Cell>
    <Cell $w={24}>
      <svg width="16" height="10" viewBox="0 0 16 10" fill="none" stroke="#1c2426" strokeWidth="1.200"><rect x=".6" y=".6" width="13" height="8.800" rx="2" /><rect x="2.500" y="2.500" width="9.200" height="5" rx=".6" fill="#1c2426" stroke="none" /><path d="M15 3.500v3" strokeWidth="1.500" /></svg>
    </Cell>
  </Tray>
);

const WindowsTaskbar = () => (
  <Taskbar>
    <Widgets>
      <WidgetIcon><NewsIcon /><Badge>8</Badge></WidgetIcon>
      <div>Upcoming<br /><span>Earnings</span></div>
    </Widgets>
    <Cell><StartLogo /></Cell>
    <SearchPill>
      <svg width="15" height="15" viewBox="0 0 15 15" fill="none" stroke="#222" strokeWidth="1.800"><circle cx="6.300" cy="6.300" r="5.300" /><path d="M10 10l4.500 4.500" /></svg>
      <span>Search</span>
      <SearchScene />
    </SearchPill>
    {apps.map((a, i) => (
      <Cell key={i}>{a.icon}{a.running && <RunDot />}</Cell>
    ))}
    <Cell $w={46}><ActiveTile><ChromeActive /></ActiveTile><RunDot $active /></Cell>
    <SystemTray />
    <Clock>19:57<br /><span>12-08-2025</span></Clock>
  </Taskbar>
);

export default function App() {
  return (
    <Screen>
      <Global />
      <BrowserChrome />
      <Viewport>
        <EmbeddingsPage />
        <ScrollTrack>
          <svg width="9" height="7" viewBox="0 0 9 7" fill="#8b8b8b"><path d="M3.700.6Q4.500-.4 5.300.6L9 6q0 1-.8 1H.8Q0 7 0 6z" /></svg>
          <ScrollThumb />
          <svg width="9" height="7" viewBox="0 0 9 7" fill="#8b8b8b"><path d="M3.700 6.400Q4.500 7.400 5.300 6.400L9 1Q9 0 8.200 0H.8Q0 0 0 1z" /></svg>
        </ScrollTrack>
        <MaskWidget>
          <MaskLogo />
          <DragDots />
        </MaskWidget>
        <SupportWidget><Headset /></SupportWidget>
      </Viewport>
      <WindowsTaskbar />
    </Screen>
  );
}
